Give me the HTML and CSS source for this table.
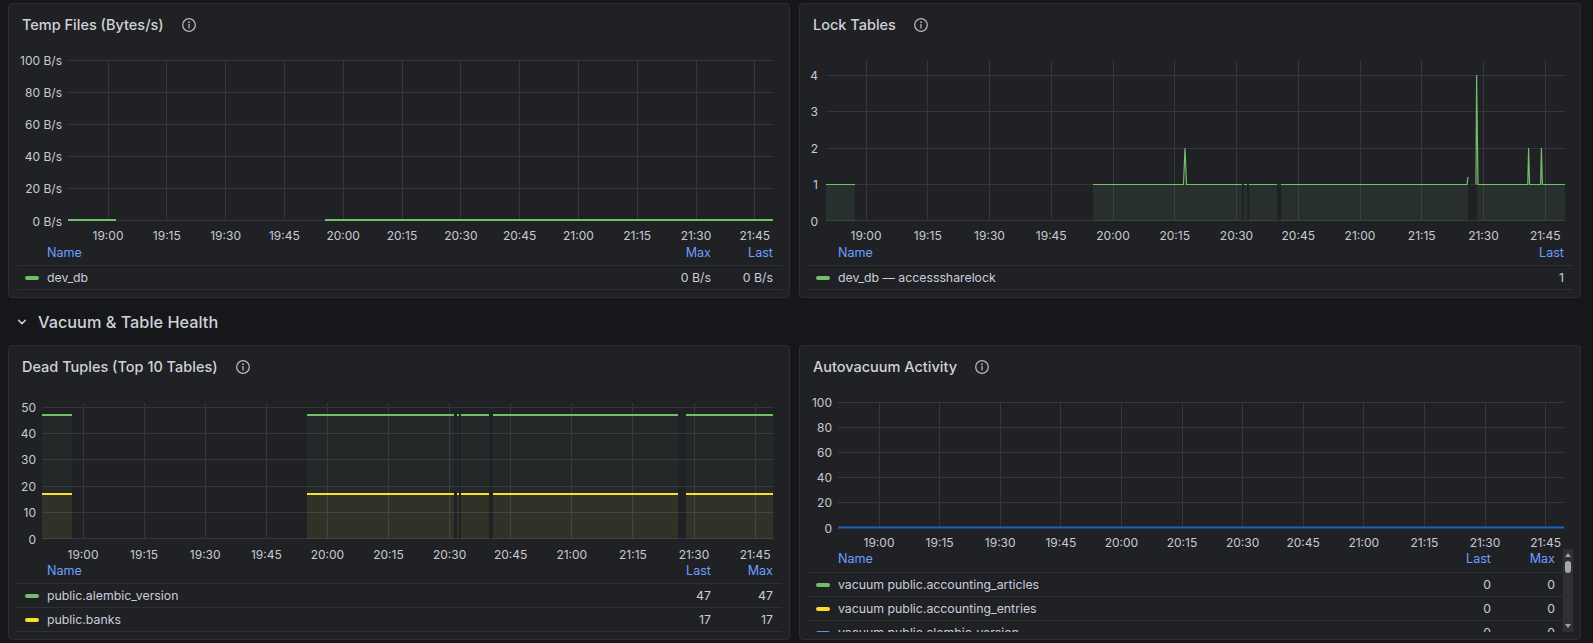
FILE: index.html
```html
<!DOCTYPE html>
<html lang="en">
<head>
<meta charset="utf-8">
<title>Dashboard</title>
<link rel="stylesheet" href="styles.css">
</head>
<body>
<div class="dash">
  <div class="row">
    <section class="panel">
      <header class="ph">
        <h2 class="pt">Temp Files (Bytes/s)</h2>
        <svg class="info" width="16" height="16" viewBox="0 0 16 16"><circle cx="8" cy="8" r="6.3"/><circle class="dot" cx="8" cy="5.2" r="0.9"/><path d="M8 7.4V10.9"/></svg>
      </header>
      <svg class="chart" width="780" height="200" viewBox="9 45 780 200">
        <g class="grid">
          <path d="M68 60.5H773M68 92.5H773M68 124.5H773M68 156.5H773M68 188.5H773M68 220.5H773"/>
          <path d="M108.5 60V221M166.5 60V221M225.5 60V221M284.5 60V221M343.5 60V221M402.5 60V221M460.5 60V221M519.5 60V221M578.5 60V221M637.5 60V221M696.5 60V221M754.5 60V221"/>
        </g>
        <g class="yl">
          <text x="62" y="60">100 B/s</text><text x="62" y="92.2">80 B/s</text><text x="62" y="124.4">60 B/s</text><text x="62" y="156.6">40 B/s</text><text x="62" y="188.8">20 B/s</text><text x="62" y="221">0 B/s</text>
        </g>
        <g class="xl">
          <text x="108" y="235">19:00</text><text x="166.8" y="235">19:15</text><text x="225.6" y="235">19:30</text><text x="284.4" y="235">19:45</text><text x="343.2" y="235">20:00</text><text x="402" y="235">20:15</text><text x="460.8" y="235">20:30</text><text x="519.6" y="235">20:45</text><text x="578.4" y="235">21:00</text><text x="637.2" y="235">21:15</text><text x="696" y="235">21:30</text><text x="754.8" y="235">21:45</text>
        </g>
        <path class="ln green2" d="M68 220H116M325 220H773"/>
      </svg>
      <div class="legend">
        <div class="lrow lhead"><span class="lname">Name</span><span class="lval">Max</span><span class="lval">Last</span></div>
        <div class="lrow"><span class="lname"><i class="mk mk-green"></i>dev_db</span><span class="lval">0 B/s</span><span class="lval">0 B/s</span></div>
      </div>
    </section>

    <section class="panel">
      <header class="ph">
        <h2 class="pt">Lock Tables</h2>
        <svg class="info" width="16" height="16" viewBox="0 0 16 16"><circle cx="8" cy="8" r="6.3"/><circle class="dot" cx="8" cy="5.2" r="0.9"/><path d="M8 7.4V10.9"/></svg>
      </header>
      <svg class="chart" width="780" height="200" viewBox="800 45 780 200">
        <g class="grid">
          <path d="M826 75.5H1565M826 111.5H1565M826 148.5H1565M826 184.5H1565M826 220.5H1565"/>
          <path d="M866.5 60V221M927.5 60V221M989.5 60V221M1051.5 60V221M1113.5 60V221M1174.5 60V221M1236.5 60V221M1298.5 60V221M1360.5 60V221M1421.5 60V221M1483.5 60V221M1545.5 60V221"/>
        </g>
        <g class="yl">
          <text x="818" y="75">4</text><text x="818" y="111.5">3</text><text x="818" y="148">2</text><text x="818" y="184.5">1</text><text x="818" y="221">0</text>
        </g>
        <g class="xl">
          <text x="866" y="235">19:00</text><text x="927.75" y="235">19:15</text><text x="989.5" y="235">19:30</text><text x="1051.25" y="235">19:45</text><text x="1113" y="235">20:00</text><text x="1174.75" y="235">20:15</text><text x="1236.5" y="235">20:30</text><text x="1298.25" y="235">20:45</text><text x="1360" y="235">21:00</text><text x="1421.75" y="235">21:15</text><text x="1483.5" y="235">21:30</text><text x="1545.25" y="235">21:45</text>
        </g>
        <path class="fill-green" d="M826 221V184.5H855V221ZM1093 221V184.5H1242V221ZM1244 221V184.5H1247V221ZM1249 221V184.5H1277V221ZM1281 221V184.5H1468V221ZM1477 221V184.5H1565V221Z"/>
        <path class="ln green1" d="M826 184.5H855M1093 184.5H1183.5L1185 148L1186.5 184.5H1242M1244 184.5H1247M1249 184.5H1277M1281 184.5H1467L1468 177M1476 184.5L1476.6 75L1478 184.5H1527.8L1528.6 148L1529.6 184.5H1540.6L1541.4 148L1542.4 184.5H1565"/>
      </svg>
      <div class="legend">
        <div class="lrow lhead one"><span class="lname">Name</span><span class="lval">Last</span></div>
        <div class="lrow one"><span class="lname"><i class="mk mk-green"></i>dev_db — accesssharelock</span><span class="lval">1</span></div>
      </div>
    </section>
  </div>

  <div class="rowhead">
    <svg class="chev" width="16" height="16" viewBox="0 0 16 16"><path d="M4.6 6.2L8 9.6L11.4 6.2"/></svg>
    <span class="rtitle">Vacuum &amp; Table Health</span>
  </div>

  <div class="row">
    <section class="panel">
      <header class="ph">
        <h2 class="pt">Dead Tuples (Top 10 Tables)</h2>
        <svg class="info" width="16" height="16" viewBox="0 0 16 16"><circle cx="8" cy="8" r="6.3"/><circle class="dot" cx="8" cy="5.2" r="0.9"/><path d="M8 7.4V10.9"/></svg>
      </header>
      <svg class="chart" width="780" height="176" viewBox="9 387 780 176">
        <g class="grid">
          <path d="M42 407.5H774M42 433.5H774M42 459.5H774M42 486.5H774M42 512.5H774M42 538.5H774"/>
          <path d="M83.5 403V539M144.5 403V539M205.5 403V539M266.5 403V539M327.5 403V539M388.5 403V539M449.5 403V539M510.5 403V539M571.5 403V539M632.5 403V539M694.5 403V539M755.5 403V539"/>
        </g>
        <g class="yl">
          <text x="36" y="407">50</text><text x="36" y="433.4">40</text><text x="36" y="459.8">30</text><text x="36" y="486.2">20</text><text x="36" y="512.6">10</text><text x="36" y="539">0</text>
        </g>
        <g class="xl">
          <text x="83" y="554">19:00</text><text x="144.1" y="554">19:15</text><text x="205.2" y="554">19:30</text><text x="266.3" y="554">19:45</text><text x="327.4" y="554">20:00</text><text x="388.5" y="554">20:15</text><text x="449.6" y="554">20:30</text><text x="510.7" y="554">20:45</text><text x="571.8" y="554">21:00</text><text x="632.9" y="554">21:15</text><text x="694" y="554">21:30</text><text x="755.1" y="554">21:45</text>
        </g>
        <path class="fill-g2" d="M42 539V415H72V539ZM307 539V415H454V539ZM457 539V415H459V539ZM461 539V415H489V539ZM493 539V415H678V539ZM686 539V415H773V539Z"/>
        <path class="fill-y" d="M42 539V494H72V539ZM307 539V494H454V539ZM457 539V494H459V539ZM461 539V494H489V539ZM493 539V494H678V539ZM686 539V494H773V539Z"/>
        <path class="ln green2" d="M42 415H72M307 415H454M457 415H459M461 415H489M493 415H678M686 415H773"/>
        <path class="ln yellow2" d="M42 494H72M307 494H454M457 494H459M461 494H489M493 494H678M686 494H773"/>
      </svg>
      <div class="legend">
        <div class="lrow lhead"><span class="lname">Name</span><span class="lval">Last</span><span class="lval">Max</span></div>
        <div class="lrow"><span class="lname"><i class="mk mk-green"></i>public.alembic_version</span><span class="lval">47</span><span class="lval">47</span></div>
        <div class="lrow"><span class="lname"><i class="mk mk-yellow"></i>public.banks</span><span class="lval">17</span><span class="lval">17</span></div>
      </div>
    </section>

    <section class="panel">
      <header class="ph">
        <h2 class="pt">Autovacuum Activity</h2>
        <svg class="info" width="16" height="16" viewBox="0 0 16 16"><circle cx="8" cy="8" r="6.3"/><circle class="dot" cx="8" cy="5.2" r="0.9"/><path d="M8 7.4V10.9"/></svg>
      </header>
      <svg class="chart" width="780" height="162" viewBox="800 387 780 162">
        <g class="grid">
          <path d="M838 402.5H1564M838 427.5H1564M838 452.5H1564M838 477.5H1564M838 502.5H1564M838 527.5H1564"/>
          <path d="M879.5 402V528M939.5 402V528M1000.5 402V528M1060.5 402V528M1121.5 402V528M1182.5 402V528M1242.5 402V528M1303.5 402V528M1363.5 402V528M1424.5 402V528M1485.5 402V528M1545.5 402V528"/>
        </g>
        <g class="yl">
          <text x="832" y="402">100</text><text x="832" y="427.2">80</text><text x="832" y="452.4">60</text><text x="832" y="477.6">40</text><text x="832" y="502.8">20</text><text x="832" y="528">0</text>
        </g>
        <g class="xl">
          <text x="879" y="542">19:00</text><text x="939.6" y="542">19:15</text><text x="1000.2" y="542">19:30</text><text x="1060.8" y="542">19:45</text><text x="1121.4" y="542">20:00</text><text x="1182" y="542">20:15</text><text x="1242.6" y="542">20:30</text><text x="1303.2" y="542">20:45</text><text x="1363.8" y="542">21:00</text><text x="1424.4" y="542">21:15</text><text x="1485" y="542">21:30</text><text x="1545.6" y="542">21:45</text>
        </g>
        <path class="ln blue2" d="M838 527.5H1564"/>
      </svg>
      <div class="legend scrollwrap">
        <div class="scrollarea">
          <div class="lrow lhead av"><span class="lname">Name</span><span class="lval">Last</span><span class="lval">Max</span></div>
          <div class="lrow av"><span class="lname"><i class="mk mk-green"></i>vacuum public.accounting_articles</span><span class="lval">0</span><span class="lval">0</span></div>
          <div class="lrow av"><span class="lname"><i class="mk mk-yellow"></i>vacuum public.accounting_entries</span><span class="lval">0</span><span class="lval">0</span></div>
          <div class="lrow av"><span class="lname"><i class="mk mk-blue"></i>vacuum public.alembic_version</span><span class="lval">0</span><span class="lval">0</span></div>
        </div>
        <div class="sbar">
          <span class="sarrow up"></span>
          <span class="sthumb"></span>
          <span class="sspace"></span>
          <span class="sarrow down"></span>
        </div>
      </div>
    </section>
  </div>
</div>
</body>
</html>
```

FILE: styles.css
```css
html, body {
  margin: 0;
  padding: 0;
  background: #16171b;
}

body {
  font-family: Inter, "Noto Sans", "Liberation Sans", sans-serif;
  color: #ccccdc;
  width: 1593px;
  height: 643px;
  overflow: hidden;
}

.dash {
  padding: 3px 0 0 8px;
  width: 1573px;
}

.row {
  display: grid;
  grid-template-columns: 782px 782px;
  column-gap: 9px;
}

.panel {
  box-sizing: border-box;
  height: 295px;
  background: #1f2125;
  border: 1px solid #2c2e33;
  border-radius: 4px;
  display: flex;
  flex-direction: column;
  overflow: hidden;
}

.ph {
  flex: none;
  height: 41px;
  display: flex;
  align-items: center;
  padding-left: 13px;
}

.pt {
  margin: 0;
  font-size: 14.5px;
  font-weight: 500;
  color: #d0d1d9;
  line-height: 20px;
}

.info {
  margin-left: 17px;
  fill: none;
  stroke: #b4b5bd;
  stroke-width: 1.3;
  stroke-linecap: round;
}

.info .dot {
  fill: #b4b5bd;
  stroke: none;
}

.chart {
  display: block;
  flex: none;
}

.grid path {
  fill: none;
  stroke: #34363b;
  stroke-width: 1;
}

.chart text {
  font-family: Inter, "Noto Sans", sans-serif;
  font-size: 12px;
  fill: #c9cad2;
  dominant-baseline: central;
}

.yl text {
  text-anchor: end;
}

.xl text {
  text-anchor: middle;
}

.ln {
  fill: none;
}

.green2 { stroke: #73bf69; stroke-width: 2; }
.green1 { stroke: #73bf69; stroke-width: 1.2; }
.yellow2 { stroke: #fade2a; stroke-width: 2; }
.blue2 { stroke: #1f60c4; stroke-width: 2; }

.fill-green { fill: rgba(115, 191, 105, 0.1); }
.fill-g2 { fill: rgba(115, 191, 105, 0.05); }
.fill-y { fill: rgba(250, 222, 42, 0.06); }

.legend {
  margin: 0 7px 0 8px;
  font-size: 12.3px;
}

.lrow {
  box-sizing: border-box;
  height: 24px;
  display: grid;
  grid-template-columns: 1fr 62px 62px;
  align-items: center;
  border-bottom: 1px solid #2e3035;
  line-height: 16px;
}

.lrow.one {
  grid-template-columns: 1fr 62px;
}

.lhead {
  height: 21px;
  align-items: start;
  color: #6e9fff;
  font-size: 12.6px;
}

.lname {
  display: flex;
  align-items: center;
  padding-left: 8px;
  white-space: nowrap;
}

.lhead .lname {
  padding-left: 30px;
}

.lval {
  text-align: right;
  padding-right: 9px;
}

.mk {
  display: inline-block;
  width: 14px;
  height: 4px;
  border-radius: 2px;
  margin-right: 8px;
}

.mk-green { background: #73bf69; }
.mk-yellow { background: #fade2a; }
.mk-blue { background: #5794f2; }

.scrollwrap {
  display: flex;
  height: 83px;
  flex: none;
}

.scrollarea {
  flex: 1;
  overflow: hidden;
}

.lrow.av {
  grid-template-columns: 1fr 64px 64px;
}

.lrow.av .lval {
  padding-right: 8px;
}

.lhead.av {
  height: 24px;
  padding-top: 2px;
}

.sbar {
  flex: none;
  width: 10px;
  background: #2f3033;
  display: flex;
  flex-direction: column;
  align-items: center;
}

.sarrow {
  flex: none;
  width: 0;
  height: 0;
  border-left: 3.5px solid transparent;
  border-right: 3.5px solid transparent;
}

.sarrow.up {
  margin-top: 4px;
  border-bottom: 4px solid #a3a4a8;
}

.sarrow.down {
  margin-bottom: 4px;
  border-top: 4px solid #a3a4a8;
}

.sthumb {
  flex: none;
  width: 6px;
  height: 12px;
  margin-top: 4px;
  border-radius: 3px;
  background: #a6a7ab;
}

.sspace {
  flex: 1;
}

.rowhead {
  height: 47px;
  display: flex;
  align-items: center;
  padding-left: 6px;
}

.chev {
  fill: none;
  stroke: #ccccdc;
  stroke-width: 1.5;
  stroke-linecap: round;
  stroke-linejoin: round;
  margin-right: 8px;
}

.rtitle {
  font-size: 16.3px;
  font-weight: 500;
  color: #d0d1d9;
}
```
